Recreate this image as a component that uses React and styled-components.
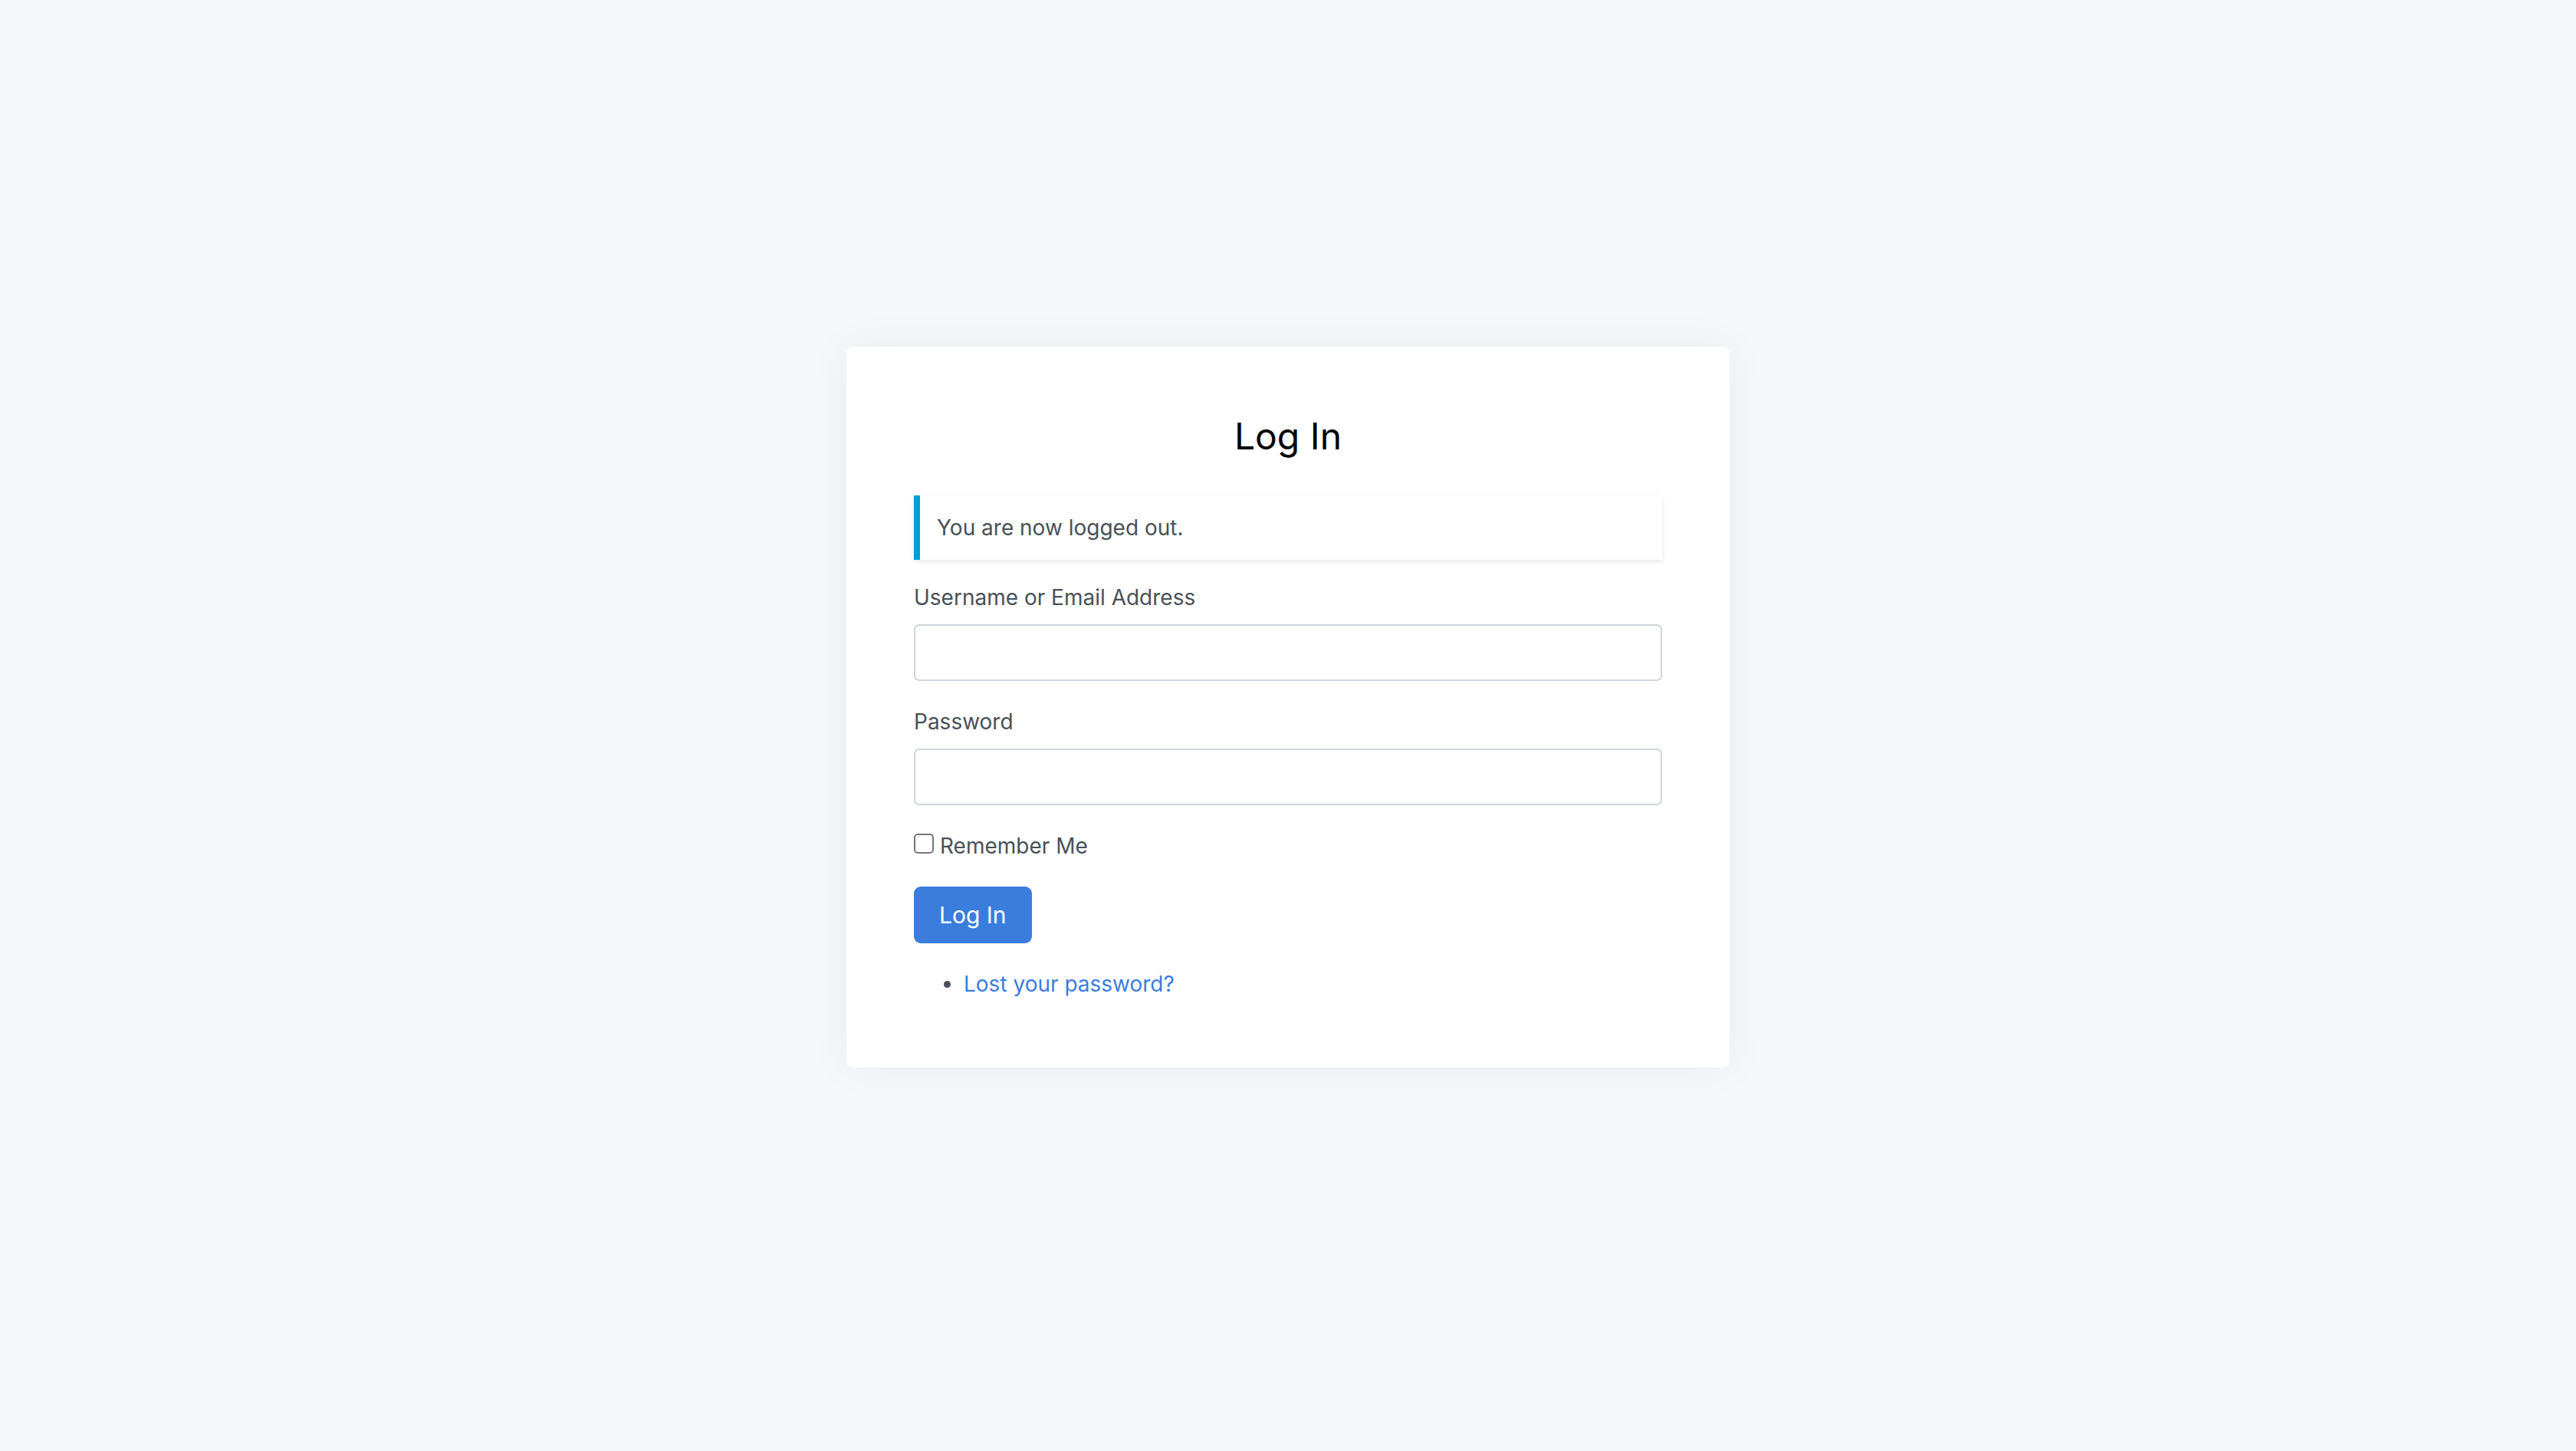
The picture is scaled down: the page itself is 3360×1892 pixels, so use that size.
import React, { useState } from "react";
import styled, { createGlobalStyle } from "styled-components";

const GlobalStyle = createGlobalStyle`
  html, body {
    margin: 0;
    padding: 0;
    background-color: #f5f7fb;
  }

  body {
    font-family: Inter, "Noto Sans", "Liberation Sans", sans-serif;
    color: #495057;
  }

  * {
    box-sizing: border-box;
  }
`;

const App = () => {
  const [user, setUser] = useState("");
  const [pass, setPass] = useState("");
  const [remember, setRemember] = useState(false);

  return (
    <Page>
      <GlobalStyle />
      <Card>
        <Title>Log In</Title>

        <Notice>You are now logged out.</Notice>

        <form onSubmit={(e) => e.preventDefault()}>
          <Field>
            <Label htmlFor="user_login">Username or Email Address</Label>
            <Input
              id="user_login"
              type="text"
              value={user}
              onChange={(e) => setUser(e.target.value)}
            />
          </Field>

          <Field>
            <Label htmlFor="user_pass">Password</Label>
            <Input
              id="user_pass"
              type="password"
              value={pass}
              onChange={(e) => setPass(e.target.value)}
            />
          </Field>

          <CheckRow>
            <Check
              type="checkbox"
              checked={remember}
              onChange={(e) => setRemember(e.target.checked)}
            />
            Remember Me
          </CheckRow>

          <SubmitBtn type="submit">Log In</SubmitBtn>
        </form>

        <LinkList>
          <LinkItem>
            <Bullet />
            <NavLink href="#">Lost your password?</NavLink>
          </LinkItem>
        </LinkList>
      </Card>
    </Page>
  );
};

export default App;

const Page = styled.div`
  min-height: 100vh;
  padding-top: 452px;
  background-color: #f5f7fb;
`;

const Card = styled.div`
  width: 1152px;
  margin: 0 auto;
  padding: 88px;
  background-color: #fff;
  border-radius: 8px;
  box-shadow: 0 0 56px 0 rgba(33, 37, 41, 0.05);
`;

const Title = styled.h1`
  margin: 0 0 48px;
  font-size: 48px;
  line-height: 58px;
  font-weight: 400;
  color: #000;
  text-align: center;
`;

const Notice = styled.div`
  margin-bottom: 28px;
  padding: 21px 22px;
  border-left: 8px solid #00a0d2;
  background-color: #fff;
  box-shadow: 0 2px 6px 0 rgba(0, 0, 0, 0.11);
  font-size: 28px;
  line-height: 42px;
  color: #495057;
`;

const Field = styled.div`
  margin-bottom: 32px;
`;

const Label = styled.label`
  display: block;
  margin-bottom: 14px;
  font-size: 28px;
  line-height: 42px;
  color: #495057;
`;

const Input = styled.input`
  display: block;
  width: 100%;
  height: 74px;
  padding: 0 20px;
  border: 2px solid #ced4da;
  border-radius: 7px;
  background-color: #fff;
  font-family: inherit;
  font-size: 28px;
  color: #495057;
  outline: none;

  &:focus {
    border-color: #9dbeee;
  }
`;

const CheckRow = styled.label`
  display: flex;
  align-items: flex-start;
  gap: 8px;
  margin-bottom: 32px;
  font-size: 28px;
  line-height: 42px;
  color: #495057;
`;

const Check = styled.input`
  appearance: none;
  flex: none;
  width: 26px;
  height: 26px;
  margin: 5px 0 0;
  border: 2px solid #767676;
  border-radius: 5px;
  background-color: #fff;

  &:checked {
    background-color: #3b7ddd;
    border-color: #3b7ddd;
  }
`;

const SubmitBtn = styled.button`
  display: flex;
  align-items: center;
  justify-content: center;
  height: 74px;
  margin-bottom: 32px;
  padding: 0 33px;
  border: none;
  border-radius: 9px;
  background-color: #3b7ddd;
  color: #fff;
  font-family: inherit;
  font-size: 30px;
  cursor: pointer;
`;

const LinkList = styled.ul`
  margin: 0;
  padding: 0 0 0 39px;
  list-style: none;
`;

const LinkItem = styled.li`
  display: flex;
  align-items: center;
  font-size: 28px;
  line-height: 42px;
`;

const Bullet = styled.span`
  width: 9px;
  height: 9px;
  margin-right: 17px;
  border-radius: 50%;
  background-color: #495057;
`;

const NavLink = styled.a`
  color: #3b7ddd;
  text-decoration: none;
`;
